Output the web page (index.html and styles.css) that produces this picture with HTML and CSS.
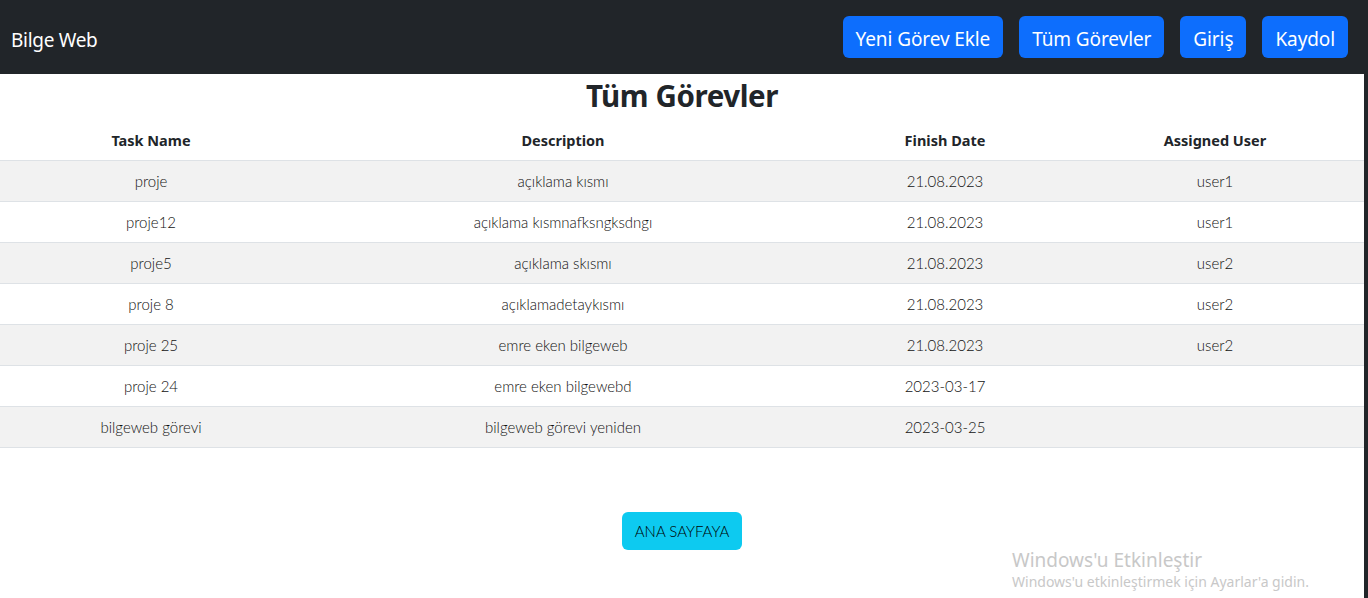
FILE: index.html
```html
<!DOCTYPE html>
<html lang="tr">
<head>
<meta charset="utf-8">
<title>Bilge Web</title>
<link rel="stylesheet" href="styles.css">
</head>
<body>
<nav class="navbar">
  <a class="brand" href="#">Bilge Web</a>
  <div class="nav-actions">
    <a class="btn-primary" href="#">Yeni Görev Ekle</a>
    <a class="btn-primary" href="#">Tüm Görevler</a>
    <a class="btn-primary" href="#">Giriş</a>
    <a class="btn-primary" href="#">Kaydol</a>
  </div>
</nav>
<main class="page">
  <h1 class="title">Tüm Görevler</h1>
  <table class="tasks">
    <colgroup>
      <col class="c1"><col class="c2"><col class="c3"><col class="c4">
    </colgroup>
    <thead>
      <tr><th>Task Name</th><th>Description</th><th>Finish Date</th><th>Assigned User</th></tr>
    </thead>
    <tbody>
      <tr><td>proje</td><td>açıklama kısmı</td><td>21.08.2023</td><td>user1</td></tr>
      <tr><td>proje12</td><td>açıklama kısmnafksngksdngı</td><td>21.08.2023</td><td>user1</td></tr>
      <tr><td>proje5</td><td>açıklama skısmı</td><td>21.08.2023</td><td>user2</td></tr>
      <tr><td>proje 8</td><td>açıklamadetaykısmı</td><td>21.08.2023</td><td>user2</td></tr>
      <tr><td>proje 25</td><td>emre eken bilgeweb</td><td>21.08.2023</td><td>user2</td></tr>
      <tr><td>proje 24</td><td>emre eken bilgewebd</td><td>2023-03-17</td><td></td></tr>
      <tr><td>bilgeweb görevi</td><td>bilgeweb görevi yeniden</td><td>2023-03-25</td><td></td></tr>
    </tbody>
  </table>
  <div class="actions">
    <a class="btn-info" href="#">ANA SAYFAYA</a>
  </div>
</main>
<div class="watermark">
  <div class="wm-title">Windows'u Etkinleştir</div>
  <div class="wm-sub">Windows'u etkinleştirmek için Ayarlar'a gidin.</div>
</div>
</body>
</html>
```
FILE: styles.css
```css
* { box-sizing: border-box; }
html, body { height: 100%; }
body {
  margin: 0;
  background: #212529;
  font-family: "Noto Sans", "Open Sans", sans-serif;
  color: #212529;
  overflow: hidden;
}
a { text-decoration: none; }
.navbar {
  height: 74px;
  background: #212529;
  display: flex;
  align-items: center;
  justify-content: space-between;
  padding: 0 20px 0 11px;
}
.brand {
  color: #fff;
  font-size: 19px;
  letter-spacing: -0.3px;
  padding-top: 5px;
}
.nav-actions {
  display: flex;
  gap: 16px;
}
.btn-primary {
  display: block;
  background: #0d6efd;
  color: #fff;
  font-size: 19px;
  height: 42px;
  line-height: 40px;
  padding: 3px 13px 0;
  border-radius: 6px;
  letter-spacing: -0.1px;
}
.page {
  background: #fff;
  width: calc(100% - 4px);
  height: calc(100% - 74px);
}
.title {
  margin: 0;
  height: 46px;
  line-height: 44px;
  text-align: center;
  font-size: 29.5px;
  font-weight: 700;
  letter-spacing: -0.4px;
}
.tasks {
  width: 100%;
  border-collapse: collapse;
  table-layout: fixed;
}
.c1 { width: 302px; }
.c2 { width: 522px; }
.c3 { width: 242px; }
.c4 { width: 298px; }
.tasks th {
  height: 40px;
  font-size: 14.5px;
  font-weight: 700;
  text-align: center;
  border-bottom: 1px solid #dee2e6;
  padding: 0;
}
.tasks td {
  height: 41px;
  font-family: "Lato", sans-serif;
  font-weight: 300;
  font-size: 15px;
  color: #111;
  text-align: center;
  border-bottom: 1px solid #dee2e6;
  padding: 0;
}
.tasks tbody tr:nth-child(odd) td { background: #f2f2f2; }
.actions {
  display: flex;
  justify-content: center;
  padding-top: 64px;
}
.btn-info {
  display: block;
  background: #0dcaf0;
  color: #000;
  font-family: "Lato", sans-serif;
  font-weight: 300;
  font-size: 15px;
  height: 38px;
  line-height: 38px;
  padding: 0 13px;
  border-radius: 6px;
}
.watermark {
  position: absolute;
  left: 1012px;
  top: 547px;
  color: #c8c8c8;
  font-family: "Noto Sans", sans-serif;
}
.wm-title { font-size: 19px; line-height: 26px; }
.wm-sub { font-size: 14px; line-height: 18px; }
```
